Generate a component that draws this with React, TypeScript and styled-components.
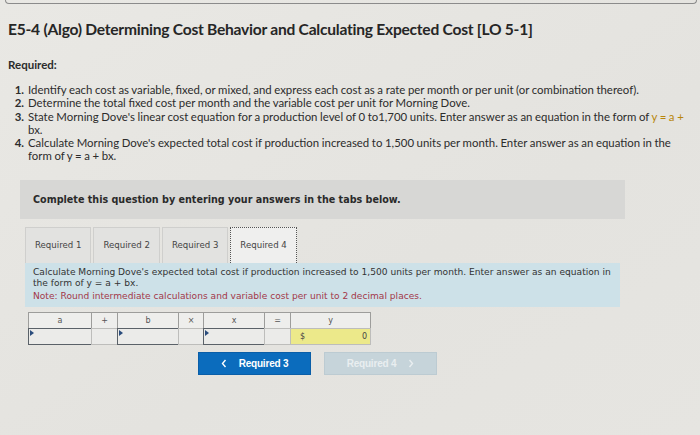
import React from 'react';
import styled, { createGlobalStyle } from 'styled-components';

const GlobalStyle = createGlobalStyle`
  html, body {
    margin: 0;
    padding: 0;
    background: #e7e6e2;
  }
  #root {
    width: 700px;
    height: 435px;
    overflow: hidden;
  }
`;

const Page = styled.div`
  height: 435px;
  background: linear-gradient(to bottom right, #e9e8e4, #e4e3df 60%, #e6e5e1);
  font-family: Lato, "Liberation Sans", sans-serif;
  color: #2a2a2a;
`;

const TopFrame = styled.div`
  height: 3px;
  margin: 0 3px 0 5px;
  border: 1px solid #8b8b8b;
  border-top: none;
  border-radius: 0 0 6px 6px;
`;

const Content = styled.div`
  padding: 0 8px;
`;

const Title = styled.h1`
  margin: 16px 0 0 0;
  font-size: 15.6px;
  font-weight: 700;
  letter-spacing: -0.25px;
  color: #262626;
`;

const Required = styled.div`
  margin-top: 20px;
  font-size: 11.5px;
  font-weight: 700;
  color: #2c2c2c;
`;

const List = styled.ol`
  margin: 12px 0 0 0;
  padding: 0;
  list-style: none;
  font-size: 11.4px;
  word-spacing: -0.3px;
  line-height: 13.3px;
  color: #2c2c2c;
`;

const Item = styled.li`
  display: flex;
  gap: 4px;
`;

const Num = styled.b`
  flex: none;
  width: 16px;
  text-align: right;
`;

const Eq = styled.span`
  color: #b8860b;
`;

const QuestionBar = styled.div`
  margin: 17px 75px 0 20px;
  height: 39px;
  display: flex;
  align-items: center;
  padding-left: 13px;
  background: #d7d7d5;
  font-family: "DejaVu Sans", Verdana, sans-serif;
  font-size: 9.6px;
  font-weight: 700;
  color: #2a2a2a;
`;

const Tabs = styled.div`
  margin: 8px 0 0 25px;
  display: flex;
  gap: 2px;
`;

const Tab = styled.div<{ $active?: boolean }>`
  height: 35px;
  padding: 0 9px;
  display: flex;
  align-items: center;
  font-family: "DejaVu Sans", Verdana, sans-serif;
  font-size: 8.6px;
  color: #444;
  background: ${(p) => (p.$active ? '#efefee' : '#e2e2e0')};
  border: ${(p) => (p.$active ? '1px dotted #555' : '1px solid #cfcfcd')};
  border-bottom: none;
`;

const Panel = styled.div`
  margin: 0 80px 0 25px;
  padding: 4px 4px 5px 8px;
  background: #cde1e8;
  font-family: "DejaVu Sans", Verdana, sans-serif;
  font-size: 9.1px;
  line-height: 11.5px;
  color: #333;
`;

const Note = styled.div`
  margin-top: 1px;
  color: #a33848;
`;

const Grid = styled.div`
  margin: 5px 0 0 29px;
  display: grid;
  grid-template-columns: 63px 26px 61px 25px 61px 26px 80px;
  width: 342px;
  font-family: "DejaVu Sans", Verdana, sans-serif;
  font-size: 8px;
  color: #555;
`;

const Head = styled.div`
  height: 15px;
  display: flex;
  align-items: center;
  justify-content: center;
  background: #eeeeec;
  border: 1px solid #9d9d9b;
  margin-left: -1px;
`;

const Cell = styled.div<{ $input?: boolean; $answer?: boolean }>`
  position: relative;
  height: 15px;
  margin-left: -1px;
  margin-top: -1px;
  border: ${(p) => (p.$input ? '1px solid #5a6168' : '1px solid #bdbdbb')};
  background: ${(p) => (p.$answer ? '#ece98a' : '#ebebe9')};
  display: flex;
  align-items: center;
  justify-content: space-between;
  padding: 0 3px 0 9px;
  color: #444;
`;

const Marker = styled.span`
  position: absolute;
  left: 1px;
  top: 1px;
  width: 0;
  height: 0;
  border-top: 3px solid transparent;
  border-bottom: 3px solid transparent;
  border-left: 4px solid #2a4c7c;
`;

const Buttons = styled.div`
  margin: 7px 0 0 198px;
  display: flex;
  gap: 13px;
`;

const NavButton = styled.div<{ $disabled?: boolean }>`
  width: 111px;
  height: 21px;
  display: flex;
  align-items: center;
  justify-content: center;
  gap: 12px;
  background: ${(p) => (p.$disabled ? '#c6d4da' : '#0b6cbd')};
  border: 1px solid ${(p) => (p.$disabled ? '#bccbd2' : '#0a5ea8')};
  color: ${(p) => (p.$disabled ? '#e9eef0' : '#ffffff')};
  font-family: "Liberation Sans", Arial, sans-serif;
  font-size: 10px;
  font-weight: 700;
  letter-spacing: -0.2px;
`;

const Chevron = ({ dir }: { dir: 'left' | 'right' }) => (
  <svg width="6" height="9" viewBox="0 0 6 9">
    <path
      d={dir === 'left' ? 'M4.5 1 L1.5 4.5 L4.5 8' : 'M1.5 1 L4.5 4.5 L1.5 8'}
      fill="none"
      stroke="currentColor"
      strokeWidth="1.4"
    />
  </svg>
);

const App: React.FC = () => {
  return (
    <Page>
      <GlobalStyle />
      <TopFrame />
      <Content>
        <Title>E5-4 (Algo) Determining Cost Behavior and Calculating Expected Cost [LO 5-1]</Title>
        <Required>Required:</Required>
        <List>
          <Item>
            <Num>1.</Num>
            <span>
              Identify each cost as variable, fixed, or mixed, and express each cost as a rate per month or per unit
              (or combination thereof).
            </span>
          </Item>
          <Item>
            <Num>2.</Num>
            <span>Determine the total fixed cost per month and the variable cost per unit for Morning Dove.</span>
          </Item>
          <Item>
            <Num>3.</Num>
            <span>
              State Morning Dove's linear cost equation for a production level of 0 to1,700 units. Enter answer as an
              equation in the form of <Eq>y = a +</Eq> bx.
            </span>
          </Item>
          <Item>
            <Num>4.</Num>
            <span>
              Calculate Morning Dove's expected total cost if production increased to 1,500 units per month. Enter
              answer as an equation in the form of y = a + bx.
            </span>
          </Item>
        </List>
      </Content>
      <QuestionBar>Complete this question by entering your answers in the tabs below.</QuestionBar>
      <Tabs>
        <Tab>Required 1</Tab>
        <Tab>Required 2</Tab>
        <Tab>Required 3</Tab>
        <Tab $active>Required 4</Tab>
      </Tabs>
      <Panel>
        Calculate Morning Dove's expected total cost if production increased to 1,500 units per month. Enter answer
        as an equation in the form of y = a + bx.
        <Note>Note: Round intermediate calculations and variable cost per unit to 2 decimal places.</Note>
      </Panel>
      <Grid>
        <Head>a</Head>
        <Head>+</Head>
        <Head>b</Head>
        <Head>×</Head>
        <Head>x</Head>
        <Head>=</Head>
        <Head>y</Head>
        <Cell $input>
          <Marker />
        </Cell>
        <Cell />
        <Cell $input>
          <Marker />
        </Cell>
        <Cell />
        <Cell $input>
          <Marker />
        </Cell>
        <Cell />
        <Cell $answer>
          <span>$</span>
          <span>0</span>
        </Cell>
      </Grid>
      <Buttons>
        <NavButton>
          <Chevron dir="left" />
          Required 3
        </NavButton>
        <NavButton $disabled>
          Required 4
          <Chevron dir="right" />
        </NavButton>
      </Buttons>
    </Page>
  );
};

export default App;
